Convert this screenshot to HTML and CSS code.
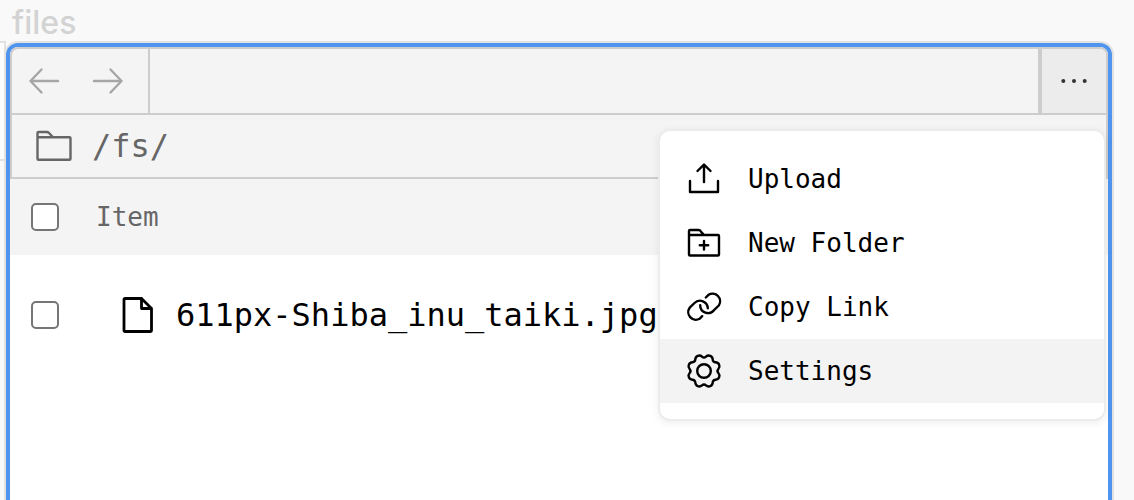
FILE: index.html
```
<!DOCTYPE html>
<html lang="en">
<head>
<meta charset="utf-8">
<title>files</title>
<link rel="stylesheet" href="styles.css">
</head>
<body>
<div class="desk">
  <h1 class="desk-title">files</h1>
  <div class="desk-row">
    <div class="neighbor"><div class="neighbor-head"></div></div>
    <main class="window">
      <div class="chrome">
        <div class="toolbar">
          <nav class="history">
            <button class="icon-button" type="button" aria-label="Back">
              <svg width="32" height="32" viewBox="0 0 32 32"><path d="M30 16H2.500M13.500 4.500 2.500 16l11 11.500"/></svg>
            </button>
            <button class="icon-button" type="button" aria-label="Forward">
              <svg width="32" height="32" viewBox="0 0 32 32"><path d="M2 16h27.500M18.500 4.500 29.500 16 18.500 27.500"/></svg>
            </button>
          </nav>
          <div class="spacer"></div>
          <button class="more" type="button" aria-label="More actions">
            <svg width="32" height="32" viewBox="0 0 32 32"><circle cx="5.300" cy="16" r="2"/><circle cx="16" cy="16" r="2"/><circle cx="26.700" cy="16" r="2"/></svg>
          </button>
        </div>
        <div class="path">
          <svg width="36" height="32" viewBox="0 0 36 32"><path d="M1.500 8V3Q1.500 2 2.500 2H11Q12 2 12.800 2.800L17 7.300M2.500 7.300H33.500Q34.500 7.300 34.500 8.300V28.700Q34.500 29.700 33.500 29.700H2.500Q1.500 29.700 1.500 28.700V7"/></svg>
          <span>/fs/</span>
        </div>
      </div>
      <div class="list-head">
        <input class="check" type="checkbox" id="all">
        <label for="all">Item</label>
      </div>
      <div class="file">
        <input class="check" type="checkbox" id="file-1">
        <label class="file-name" for="file-1">
          <svg width="32" height="36" viewBox="0 0 32 36"><path d="M4 1.500H20.500L30.500 11.500V33.500Q30.500 34.500 29.500 34.500H4Q3 34.500 3 33.500V2.500Q3 1.500 4 1.500ZM20.500 1.500V11.500H30.500"/></svg>
          <span>611px-Shiba_inu_taiki.jpg</span>
        </label>
      </div>
      <div class="menu" role="menu">
        <button class="menu-item" type="button" role="menuitem">
          <svg width="36" height="36" viewBox="0 0 36 36"><path d="M18 21V4M11.500 10 18 3.500 24.500 10M4 20V31H32V20"/></svg>
          <span>Upload</span>
        </button>
        <button class="menu-item" type="button" role="menuitem">
          <svg width="36" height="36" viewBox="0 0 36 36"><path d="M3 9.500V6Q3 5 4 5H12.500Q13.500 5 14.200 5.700L18 10M4 10H32Q33 10 33 11V29.500Q33 30.500 32 30.500H4Q3 30.500 3 29.500V9M18 16V24.500M13.800 20.300H22.200"/></svg>
          <span>New Folder</span>
        </button>
        <button class="menu-item" type="button" role="menuitem">
          <svg width="36" height="36" viewBox="0 0 36 36"><path d="M19.800 8.500 22.500 5.800A7.600 7.600 0 0 1 32.800 16.500L28 21.200A7.800 7.800 0 0 1 14.200 16.200M21.800 19.200A7.800 7.800 0 0 0 8.500 14L3.700 18.700A7.600 7.600 0 0 0 13.500 29.800L16.200 27.200"/></svg>
          <span>Copy Link</span>
        </button>
        <button class="menu-item selected" type="button" role="menuitem">
          <svg width="36" height="36" viewBox="-18 -18 36 36"><circle r="6.800"/><path d="M14.350 2Q16.100 4 15.150 6.300Q14.200 8.550 11.550 8.700Q8.900 8.900 8.700 11.550Q8.550 14.200 6.300 15.150Q4 16.100 2 14.350Q0 12.600 -2 14.350Q-4 16.100 -6.300 15.150Q-8.550 14.200 -8.700 11.550Q-8.900 8.900 -11.550 8.700Q-14.200 8.550 -15.150 6.300Q-16.100 4 -14.350 2Q-12.600 0 -14.350 -2Q-16.100 -4 -15.150 -6.300Q-14.200 -8.550 -11.550 -8.700Q-8.900 -8.900 -8.700 -11.550Q-8.550 -14.200 -6.300 -15.150Q-4 -16.100 -2 -14.350Q0 -12.600 2 -14.350Q4 -16.100 6.300 -15.150Q8.550 -14.200 8.700 -11.550Q8.900 -8.900 11.550 -8.700Q14.200 -8.550 15.150 -6.300Q16.100 -4 14.350 -2Q12.600 0 14.350 2Z"/></svg>
          <span>Settings</span>
        </button>
      </div>
    </main>
  </div>
</div>
</body>
</html>
```
FILE: styles.css
```
* { box-sizing: border-box; }

body {
  margin: 0;
  background: #f9f9f9;
  color: #000;
  font-family: "DejaVu Sans Mono", monospace;
}

button {
  margin: 0;
  padding: 0;
  border: 0;
  background: none;
  color: inherit;
  font: inherit;
}

svg {
  flex: none;
  display: block;
  fill: none;
  stroke: currentColor;
  stroke-width: 2.4;
  stroke-linecap: round;
  stroke-linejoin: round;
}

.desk {
  display: flex;
  flex-direction: column;
  min-height: 100vh;
}

.desk-title {
  margin: 0;
  padding: 3px 12px 0;
  height: 43px;
  color: #d3d3d3;
  font: 500 32px/40px Inter, sans-serif;
}

.desk-row {
  flex: 1;
  display: flex;
  padding-right: 22px;
}

.neighbor {
  width: 6px;
  border-right: 2px solid #e2e2e2;
  box-shadow: 0 -2px #e2e2e2;
}

.neighbor-head {
  height: 118px;
  background: #fdfdfd;
  border-bottom: 2px solid #e2e2e2;
}

.window {
  position: relative;
  flex: 1;
  min-width: 0;
  border: 4px solid #4f94ef;
  border-bottom: 0;
  border-radius: 12px 12px 0 0;
  background: #fff;
  box-shadow: 0 0 0 2px #e2e2e2;
}

.chrome {
  border: 2px solid #cdcdcd;
  border-radius: 8px 8px 0 0;
  background: #f4f4f4;
  overflow: hidden;
}

.toolbar {
  display: flex;
  height: 66px;
  border-bottom: 2px solid #cdcdcd;
}

.history {
  display: flex;
  align-items: center;
  gap: 32px;
  padding: 0 24px 0 16px;
  border-right: 2px solid #cdcdcd;
  color: #a6a6a6;
}

.spacer { flex: 1; }

.more {
  display: flex;
  align-items: center;
  justify-content: center;
  width: 68px;
  border-left: 4px solid #cdcdcd;
  background: #ececec;
  color: #333;
}

.more svg {
  fill: currentColor;
  stroke: none;
}

.path {
  display: flex;
  align-items: center;
  gap: 20px;
  height: 62px;
  padding-left: 24px;
  color: #666;
  font-size: 32px;
}

.list-head {
  display: flex;
  align-items: center;
  gap: 37px;
  height: 76px;
  padding-left: 21px;
  background: #f4f4f4;
  color: #666;
  font-size: 26px;
}

.check {
  flex: none;
  appearance: none;
  width: 28px;
  height: 28px;
  margin: 0;
  border: 2px solid #767676;
  border-radius: 5px;
  background: #fff;
}

.file {
  display: flex;
  align-items: center;
  gap: 62px;
  height: 120px;
  padding-left: 21px;
  font-size: 32px;
}

.file-name {
  display: flex;
  align-items: center;
  gap: 23px;
}

.file-name svg { stroke-width: 2.8; }

.menu {
  position: absolute;
  top: 82px;
  right: 2px;
  width: 448px;
  padding: 16px 0;
  border: 2px solid #ececec;
  border-radius: 12px;
  background: #fff;
  box-shadow: 0 2px 8px rgba(0, 0, 0, 0.07);
}

.menu-item {
  display: flex;
  align-items: center;
  gap: 26px;
  width: 100%;
  height: 64px;
  padding-left: 26px;
  font-size: 26px;
  text-align: left;
}

.menu-item.selected { background: #f3f3f3; }
```
